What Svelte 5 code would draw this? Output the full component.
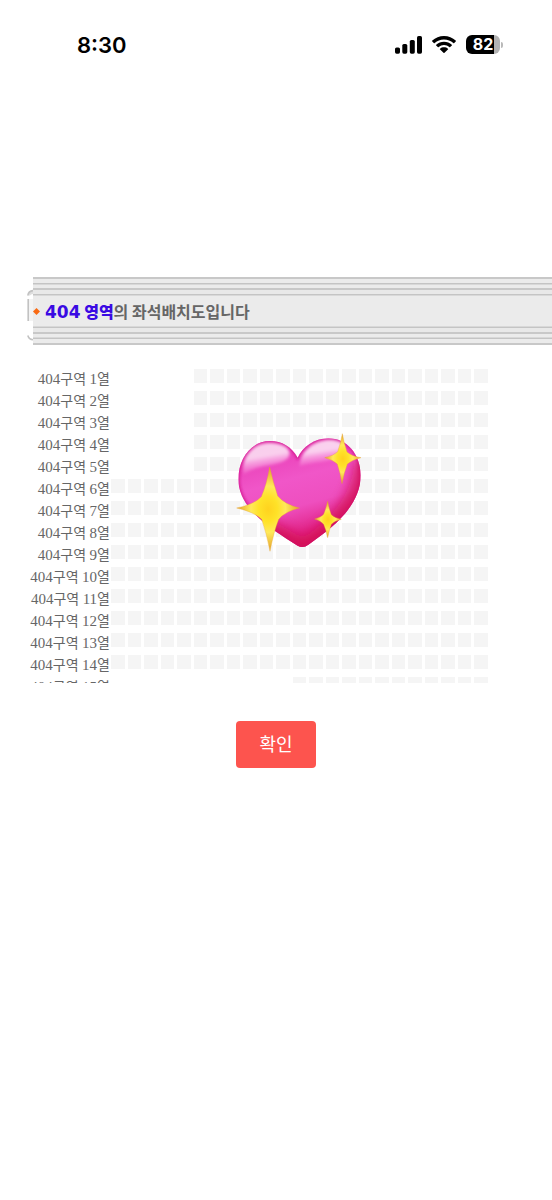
<script lang="ts">
  interface Row {
    number: number;
    seats: number;
  }

  const section = 404;
  const columns = 23;

  const rows: Row[] = Array.from({ length: 15 }, (_, i) => {
    const number = i + 1;
    const seats = number <= 5 ? 18 : number === 15 ? 12 : columns;
    return { number, seats };
  });
</script>

<div class="screen">
  <header class="status">
    <span class="time">8:30</span>
    <div class="indicators">
      <svg class="signal" viewBox="0 0 27 18" aria-hidden="true">
        <rect x="0" y="11.500" width="5" height="6.200" rx="1.600" />
        <rect x="7.300" y="8" width="5" height="9.700" rx="1.600" />
        <rect x="14.800" y="4" width="5" height="13.700" rx="1.600" />
        <rect x="22" y="0" width="5" height="17.700" rx="1.600" />
      </svg>
      <svg class="wifi" viewBox="0 0 24 17" aria-hidden="true">
        <path d="M12 0C7.5 0 3.300 1.700.3 4.600a.6.600 0 0 0 0 .9l1.500 1.500a.6.6 0 0 0 .9 0A13.400 13.400 0 0 1 12 3.400c3.600 0 6.800 1.400 9.300 3.600a.6.6 0 0 0 .9 0l1.500-1.500a.6.6 0 0 0 0-.9C20.700 1.700 16.500 0 12 0z" />
        <path d="M12 5.700c-3 0-5.700 1.100-7.800 3a.6.6 0 0 0 0 .9l1.600 1.500a.6.6 0 0 0 .9 0A7.900 7.900 0 0 1 12 9.100c2 0 3.900.8 5.300 2a.6.6 0 0 0 .9 0l1.600-1.500a.6.6 0 0 0 0-.9c-2.100-1.900-4.800-3-7.800-3z" />
        <path d="M12 11.300c-1.500 0-2.900.5-3.900 1.400a.6.6 0 0 0 0 .9l3.400 3.200a.7.7 0 0 0 1 0l3.400-3.200a.6.6 0 0 0 0-.9c-1-.9-2.400-1.400-3.900-1.400z" />
      </svg>
      <div class="battery">
        <span class="level">82</span>
        <span class="nub"></span>
      </div>
    </div>
  </header>

  <main>
    <section class="viewport">
      <div class="banner">
        <svg class="edge" viewBox="0 0 6 68" aria-hidden="true">
          <path d="M.8 18.500Q1.500 14 6 13.600V17Q3.600 17 3 18.500z" fill="#dedede" />
          <path d="M.8 18.500Q1.500 14 6 13.600M.8 58.500Q2 62.500 6 62.700" fill="none" stroke="#c2c2c2" stroke-width="1.600" />
          <path d="M2 22h4v22H2z" fill="#f3f3f3" />
          <path d="M1.200 22v22" stroke="#c2c2c2" stroke-width="1.600" />
        </svg>
        <div class="panel">
          <div class="lines"></div>
          <h1>
            <svg class="bullet" viewBox="0 0 7 7" aria-hidden="true">
              <path d="M3.500 0 7 3.500 3.500 7 0 3.500z" fill="#f96a13" />
            </svg>
            <span><strong><span class="code">{section}</span> 영역</strong>의 좌석배치도입니다</span>
          </h1>
          <div class="lines bottom"></div>
        </div>
      </div>

      <ol class="rows">
        {#each rows as row (row.number)}
          <li class="row">
            <span class="label"><span class="num">{section}</span>구역 <span class="num">{row.number}</span>열</span>
            <div class="seats">
              {#each { length: columns } as _, i}
                <span class="seat" class:empty={i < columns - row.seats}></span>
              {/each}
            </div>
          </li>
        {/each}
      </ol>

      <svg class="heart" viewBox="0 0 450 405" role="img" aria-label="heart">
        <defs>
          <linearGradient id="body" gradientUnits="userSpaceOnUse" x1="160" y1="50" x2="250" y2="375">
            <stop offset="0" stop-color="#e83bb5" />
            <stop offset=".35" stop-color="#f056c8" />
            <stop offset=".6" stop-color="#ee4fbf" />
            <stop offset=".82" stop-color="#e2268a" />
            <stop offset="1" stop-color="#d91560" />
          </linearGradient>
          <linearGradient id="shine" x1="0" y1="0" x2=".25" y2="1">
            <stop offset="0" stop-color="#fff" stop-opacity=".75" />
            <stop offset=".5" stop-color="#fff" stop-opacity=".75" />
            <stop offset="1" stop-color="#ff9de6" stop-opacity=".15" />
          </linearGradient>
          <radialGradient id="spark">
            <stop offset="0" stop-color="#ffd21f" />
            <stop offset=".3" stop-color="#ffe228" />
            <stop offset=".55" stop-color="#ffe95a" />
            <stop offset="1" stop-color="#e3a12c" />
          </radialGradient>
          <clipPath id="shape">
            <path d="M218 98C200 65 170 48 135 48C78 48 40 101 40 163C40 249 133 309 218 362Q234 372 250 359C330 304 407 239 407 151C407 87 365 40 310 40C268 40 233 66 218 98z" />
          </clipPath>
          <filter id="soft" x="-20%" y="-20%" width="140%" height="140%">
            <feGaussianBlur stdDeviation="5" />
          </filter>
          <filter id="shade" x="-20%" y="-20%" width="140%" height="140%">
            <feGaussianBlur stdDeviation="16" />
          </filter>
        </defs>
        <g clip-path="url(#shape)">
          <path d="M30 30h390v350H30z" fill="url(#body)" />
          <path d="M218 98C200 65 170 48 135 48C78 48 40 101 40 163C40 249 133 309 218 362Q234 372 250 359C330 304 407 239 407 151C407 87 365 40 310 40C268 40 233 66 218 98z" fill="none" stroke="#d3178e" stroke-width="8" filter="url(#soft)" />
          <path d="M415 105C415 220 340 305 235 372L110 300" fill="none" stroke="#d20b50" stroke-width="56" opacity=".75" filter="url(#shade)" />
          <path d="M56 148C46 95 88 52 134 54C184 54 204 80 188 100C162 126 98 116 56 148z" fill="url(#shine)" filter="url(#soft)" />
          <path d="M224 124C226 74 272 45 314 45C358 44 368 72 347 91C315 116 268 108 224 124z" fill="url(#shine)" filter="url(#soft)" />
        </g>
        <g fill="url(#spark)" stroke="#e7a52b" stroke-width="1">
          <path d="M134 126Q145 174 158 213Q179 239 224 249Q180 259 161 283Q147 318 135 379Q124 323 110 283Q88 261 35 249Q86 239 109 215Q125 179 134 126z" />
          <path d="M352 26Q357 55 366 81Q379 93 408 98Q380 105 367 117Q357 143 351 176Q346 144 337 117Q325 105 299 98Q326 92 338 80Q347 56 352 26z" />
          <path d="M308 229Q312 252 319 269Q328 278 349 283Q328 288 319 298Q313 315 308 338Q303 314 296 298Q288 288 269 282Q288 277 296 268Q303 251 308 229z" />
        </g>
      </svg>
    </section>

    <button type="button" class="confirm">확인</button>
  </main>
</div>

<style>
  :global(body) {
    margin: 0;
    background: #fff;
  }

  .screen {
    min-height: 100vh;
    overflow: hidden;
    font-family: "Noto Sans CJK KR", sans-serif;
  }

  .status {
    display: flex;
    justify-content: space-between;
    align-items: center;
    height: 89px;
    padding: 0 49px 0 77px;
    color: #000;
  }

  .time {
    font: 600 22px/28px Inter, sans-serif;
  }

  .indicators {
    display: flex;
    align-items: center;
    gap: 10px;
  }

  .signal {
    width: 27px;
    height: 18px;
  }

  .wifi {
    width: 24px;
    height: 17px;
  }

  .battery {
    display: flex;
    align-items: center;
    gap: 1px;
  }

  .level {
    width: 34px;
    border-radius: 6px;
    background: linear-gradient(90deg, #000 82%, #b3b3b3 82%);
    color: #fff;
    font: 700 16px/19px Inter, sans-serif;
    text-align: center;
  }

  .nub {
    width: 2px;
    height: 6px;
    border-radius: 0 3px 3px 0;
    background: #b9b9b9;
  }

  main {
    display: flex;
    flex-direction: column;
    align-items: center;
    gap: 38px;
    padding-top: 188px;
  }

  .viewport {
    position: relative;
    width: 100%;
    height: 406px;
    overflow: hidden;
  }

  .banner {
    display: flex;
    padding-left: 27px;
  }

  .edge {
    width: 6px;
    height: 68px;
  }

  .panel {
    flex: 1;
    background: #ebebeb;
  }

  .lines {
    height: 19px;
    background: linear-gradient(
      #c8c8c8 2px, #ebebeb 2px 6px,
      #c4c4c4 6px 7px, #d8d8d8 7px 8px, #ebebeb 8px 11px,
      #c8c8c8 11px 13px, #e8e8e8 13px 17px,
      #c4c4c4 17px 18px, #d8d8d8 18px
    );
  }

  .lines.bottom {
    transform: rotate(180deg);
  }

  h1 {
    display: flex;
    align-items: center;
    gap: 5px;
    height: 30px;
    margin: 0;
    color: #666;
    font-size: 16px;
    font-weight: 700;
    line-height: 28px;
    white-space: nowrap;
  }

  h1 strong {
    color: #3a0ae3;
  }

  .code {
    font-family: "DejaVu Sans", sans-serif;
    font-size: 17px;
  }

  .bullet {
    width: 7px;
    height: 7px;
  }

  .rows {
    margin: 0;
    padding: 23px 64px 0 0;
    list-style: none;
  }

  .row {
    display: flex;
    height: 22px;
  }

  .label {
    width: 110px;
    margin-right: 1px;
    color: #666;
    font-family: "Liberation Serif", "Noto Sans CJK KR", serif;
    font-size: 14px;
    line-height: 22px;
    text-align: right;
    white-space: nowrap;
  }

  .num {
    font-size: 15px;
  }

  .seats {
    display: grid;
    flex: 1;
    grid-template-columns: repeat(23, 1fr);
    column-gap: 3px;
    padding-top: 1px;
  }

  .seat {
    height: 14px;
    background: #f5f5f5;
  }

  .seat.empty {
    visibility: hidden;
  }

  .heart {
    position: absolute;
    top: 148px;
    left: calc(50% - 51px);
    width: 150px;
    height: 135px;
  }

  .confirm {
    padding: 9px 23px 12px;
    border: 0;
    border-radius: 4px;
    background: #fd544e;
    color: #fff;
    font-family: "Noto Sans CJK KR", sans-serif;
    font-size: 18px;
    font-weight: 400;
    line-height: 26px;
    cursor: pointer;
  }
</style>
